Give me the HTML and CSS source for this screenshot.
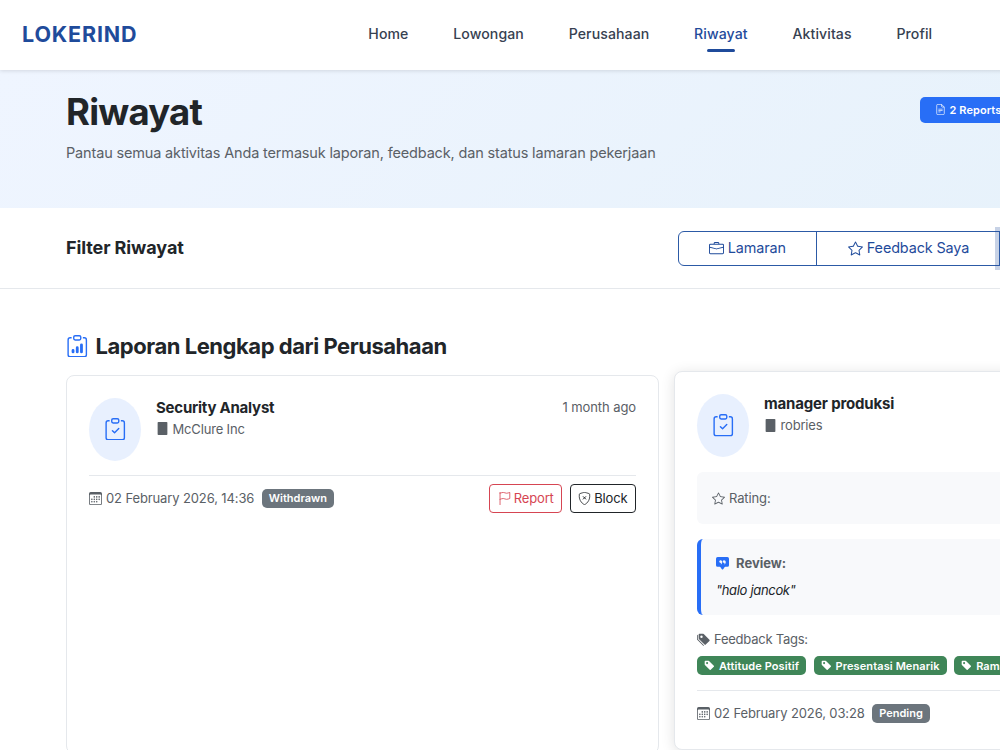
FILE: index.html
```html
<!DOCTYPE html>
<html lang="id">
<head>
<meta charset="utf-8">
<title>Riwayat - LOKERIND</title>
<link rel="stylesheet" href="styles.css">
</head>
<body>
<svg class="sprite" aria-hidden="true">
  <symbol id="board" viewBox="0 0 16 16"><path d="M4 1.5H3a2 2 0 0 0-2 2V14a2 2 0 0 0 2 2h10a2 2 0 0 0 2-2V3.5a2 2 0 0 0-2-2h-1v1h1a1 1 0 0 1 1 1V14a1 1 0 0 1-1 1H3a1 1 0 0 1-1-1V3.5a1 1 0 0 1 1-1h1z"/><path d="M9.5 1a.5.5 0 0 1 .5.5v1a.5.5 0 0 1-.5.5h-3a.5.5 0 0 1-.5-.5v-1a.5.5 0 0 1 .5-.5zm-3-1A1.5 1.5 0 0 0 5 1.5v1A1.5 1.5 0 0 0 6.5 4h3A1.5 1.5 0 0 0 11 2.5v-1A1.5 1.5 0 0 0 9.5 0z"/></symbol>
  <symbol id="data" viewBox="0 0 16 16"><use href="#board"/><path d="M4 11a1 1 0 1 1 2 0v1a1 1 0 1 1-2 0zm6-4a1 1 0 1 1 2 0v5a1 1 0 1 1-2 0zM7 9a1 1 0 0 1 2 0v3a1 1 0 1 1-2 0z"/></symbol>
  <symbol id="check" viewBox="0 0 16 16"><use href="#board"/><path d="M10.854 7.146a.5.5 0 0 1 0 .708l-3 3a.5.5 0 0 1-.708 0l-1.5-1.5a.5.5 0 1 1 .708-.708L7.5 9.793l2.646-2.647a.5.5 0 0 1 .708 0"/></symbol>
  <symbol id="star" viewBox="0 0 16 16"><path d="M2.866 14.85c-.078.444.36.791.746.593l4.39-2.256 4.389 2.256c.386.198.824-.149.746-.592l-.83-4.73 3.522-3.356c.33-.314.16-.888-.282-.95l-4.898-.696L8.465.792a.513.513 0 0 0-.927 0L5.354 5.12l-4.898.696c-.441.062-.612.636-.283.95l3.523 3.356-.83 4.73zm4.905-2.767-3.686 1.894.694-3.957a.56.56 0 0 0-.163-.505L1.71 6.745l4.052-.576a.53.53 0 0 0 .393-.288L8 2.223l1.847 3.658a.53.53 0 0 0 .393.288l4.052.575-2.906 2.77a.56.56 0 0 0-.163.506l.694 3.957-3.686-1.894a.5.5 0 0 0-.461 0z"/></symbol>
  <symbol id="briefcase" viewBox="0 0 16 16"><path d="M6.5 1A1.5 1.5 0 0 0 5 2.5V3H1.5A1.5 1.5 0 0 0 0 4.5v8A1.5 1.5 0 0 0 1.5 14h13a1.5 1.5 0 0 0 1.5-1.5v-8A1.5 1.5 0 0 0 14.5 3H11v-.5A1.5 1.5 0 0 0 9.5 1zm0 1h3a.5.5 0 0 1 .5.5V3H6v-.5a.5.5 0 0 1 .5-.5m1.886 6.914L15 7.151V12.5a.5.5 0 0 1-.5.5h-13a.5.5 0 0 1-.5-.5V7.15l6.614 1.764a1.5 1.5 0 0 0 .772 0M1.5 4h13a.5.5 0 0 1 .5.5v1.616L8.129 7.948a.5.5 0 0 1-.258 0L1 6.116V4.5a.5.5 0 0 1 .5-.5"/></symbol>
  <symbol id="flag" viewBox="0 0 16 16"><path fill="none" stroke="currentColor" stroke-linecap="round" stroke-linejoin="round" d="M2.5.5v15M2.5 1.5C4 1 5.5.5 6.5.5c1.5 0 2.5 1 4 1 1.2 0 2.8-.5 4-1V8c-1.2.5-2.8 1-4 1-1.5 0-2.5-1-4-1-1.2 0-2.8.5-4 1"/></symbol>
  <symbol id="shield" viewBox="0 0 16 16"><path fill="none" stroke="currentColor" d="M5.2 1.1a61 61 0 0 0-2.9.9.98.98 0 0 0-.65.8c-.6 4.5.8 7.5 2.4 9.6a11 11 0 0 0 2.4 2.3q1 .7 1.55.8.55-.1 1.55-.8a11 11 0 0 0 2.4-2.3c1.6-2.1 3-5.1 2.4-9.6a.98.98 0 0 0-.65-.8c-.6-.2-1.8-.6-2.9-.9Q8.7.5 8 .5q-.7 0-2.8.6z"/><path fill="none" stroke="currentColor" stroke-width="1.2" stroke-linecap="round" d="m6.5 5.7 3 3m0-3-3 3"/></symbol>
  <symbol id="file" viewBox="0 0 16 16"><path fill="none" stroke="currentColor" stroke-linejoin="round" d="M9.5.5H4A1.5 1.5 0 0 0 2.5 2v12A1.5 1.5 0 0 0 4 15.5h8a1.5 1.5 0 0 0 1.5-1.5V4.5zv2.5A1.5 1.5 0 0 0 11 4.5h2.5"/><path fill="none" stroke="currentColor" stroke-linecap="round" d="M5.5 7.5h5m-5 2h5m-5 2h2"/></symbol>
  <symbol id="calendar" viewBox="0 0 16 16"><path d="M14 0H2a2 2 0 0 0-2 2v12a2 2 0 0 0 2 2h12a2 2 0 0 0 2-2V2a2 2 0 0 0-2-2M1 3.857C1 3.384 1.448 3 2 3h12c.552 0 1 .384 1 .857v10.286c0 .473-.448.857-1 .857H2c-.552 0-1-.384-1-.857z"/><path fill="none" stroke="currentColor" stroke-width="2" stroke-linecap="round" stroke-dasharray="0 3" d="M6.5 6h6.1M3.5 9h9.1M3.5 12h6.1"/></symbol>
  <symbol id="building" viewBox="0 0 16 16"><path d="M3 0h10a1 1 0 0 1 1 1v14a1 1 0 0 1-1 1H3a1 1 0 0 1-1-1V1a1 1 0 0 1 1-1"/></symbol>
  <symbol id="quote" viewBox="0 0 16 16"><path d="M0 2a2 2 0 0 1 2-2h12a2 2 0 0 1 2 2v8a2 2 0 0 1-2 2h-2.5a1 1 0 0 0-.8.4l-1.9 2.533a1 1 0 0 1-1.6 0L5.3 12.4a1 1 0 0 0-.8-.4H2a2 2 0 0 1-2-2zm7.194 2.766a1.7 1.7 0 0 0-.227-.272 1.5 1.5 0 0 0-.469-.324l-.008-.004A1.8 1.8 0 0 0 5.734 4C4.776 4 4 4.746 4 5.667c0 .92.776 1.666 1.734 1.666.343 0 .662-.095.931-.26-.137.389-.39.804-.81 1.22a.405.405 0 0 0 .011.59c.173.16.447.155.614-.01 1.334-1.329 1.37-2.758.941-3.706a2.5 2.5 0 0 0-.227-.4zM11 7.073c-.136.389-.39.804-.81 1.22a.405.405 0 0 0 .012.59c.172.16.446.155.613-.01 1.334-1.329 1.37-2.758.942-3.706a2.5 2.5 0 0 0-.228-.4 1.7 1.7 0 0 0-.227-.273 1.5 1.5 0 0 0-.469-.324l-.008-.004A1.8 1.8 0 0 0 10.07 4c-.957 0-1.734.746-1.734 1.667 0 .92.777 1.666 1.734 1.666.343 0 .662-.095.931-.26z"/></symbol>
  <symbol id="tag" viewBox="0 0 16 16"><path d="M2 1a1 1 0 0 0-1 1v4.586a1 1 0 0 0 .293.707l7 7a1 1 0 0 0 1.414 0l4.586-4.586a1 1 0 0 0 0-1.414l-7-7A1 1 0 0 0 6.586 1zm4 3.5a1.5 1.5 0 1 1-3 0 1.5 1.5 0 0 1 3 0"/></symbol>
  <symbol id="tags" viewBox="0 0 16 16"><path d="M2 2a1 1 0 0 1 1-1h4.586a1 1 0 0 1 .707.293l7 7a1 1 0 0 1 0 1.414l-4.586 4.586a1 1 0 0 1-1.414 0l-7-7A1 1 0 0 1 2 6.586zm3.5 4a1.5 1.5 0 1 0 0-3 1.5 1.5 0 0 0 0 3"/><path d="M1.293 7.793A1 1 0 0 1 1 7.086V2a1 1 0 0 0-1 1v4.586a1 1 0 0 0 .293.707l7 7a1 1 0 0 0 1.414 0l.043-.043z"/></symbol>
</svg>
<div class="page">
  <header class="navbar">
    <a class="brand">LOKERIND</a>
    <nav class="links"><a>Home</a><a>Lowongan</a><a>Perusahaan</a><a class="active">Riwayat</a><a>Aktivitas</a><a>Profil</a></nav>
  </header>
  <section class="hero">
    <div>
      <h1>Riwayat</h1>
      <p>Pantau semua aktivitas Anda termasuk laporan, feedback, dan status lamaran pekerjaan</p>
    </div>
    <div class="count"><svg class="icon"><use href="#file"/></svg><span>2 Reports</span></div>
  </section>
  <section class="filter">
    <h2>Filter Riwayat</h2>
    <div class="group">
      <button class="first"><svg class="icon"><use href="#briefcase"/></svg><span>Lamaran</span></button>
      <button class="second"><svg class="icon"><use href="#star"/></svg><span>Feedback Saya</span></button>
      <button class="current"></button>
    </div>
  </section>
  <main>
    <h2 class="section-title"><svg class="icon"><use href="#data"/></svg><span>Laporan Lengkap dari Perusahaan</span></h2>
    <div class="cards">
      <article class="card">
        <div class="card-head">
          <div class="avatar"><svg class="icon"><use href="#check"/></svg></div>
          <div class="who"><h3>Security Analyst</h3><p><svg class="icon"><use href="#building"/></svg><span>McClure Inc</span></p></div>
          <div class="ago">1 month ago</div>
        </div>
        <div class="card-foot">
          <svg class="icon"><use href="#calendar"/></svg><span class="date">02 February 2026, 14:36</span><b class="status">Withdrawn</b>
          <div class="actions"><button class="report"><svg class="icon"><use href="#flag"/></svg><span>Report</span></button><button class="block"><svg class="icon"><use href="#shield"/></svg><span>Block</span></button></div>
        </div>
      </article>
      <article class="card raised">
        <div class="card-head">
          <div class="avatar"><svg class="icon"><use href="#check"/></svg></div>
          <div class="who"><h3>manager produksi</h3><p><svg class="icon"><use href="#building"/></svg><span>robries</span></p></div>
        </div>
        <div class="rating"><svg class="icon"><use href="#star"/></svg><span>Rating:</span></div>
        <div class="review"><h4><svg class="icon"><use href="#quote"/></svg><span>Review:</span></h4><p>"halo jancok"</p></div>
        <div class="tags-title"><svg class="icon"><use href="#tags"/></svg><span>Feedback Tags:</span></div>
        <div class="tags"><b><svg class="icon"><use href="#tag"/></svg><span>Attitude Positif</span></b><b><svg class="icon"><use href="#tag"/></svg><span>Presentasi Menarik</span></b><b><svg class="icon"><use href="#tag"/></svg><span>Ramah</span></b></div>
        <div class="card-foot"><svg class="icon"><use href="#calendar"/></svg><span class="date">02 February 2026, 03:28</span><b class="status">Pending</b></div>
      </article>
    </div>
  </main>
</div>
</body>
</html>
```
FILE: styles.css
```css
* { box-sizing: border-box; }
body { margin: 0; overflow: hidden; height: 750px; background: #fff; color: #212529; font: 13px/20px Inter, "Liberation Sans", sans-serif; letter-spacing: -.12px; }
h1, h2, h3, h4, p { margin: 0; }
button { font: inherit; letter-spacing: inherit; background: #fff; margin: 0; }
.sprite { position: absolute; width: 0; height: 0; }
.icon { display: block; flex: none; width: 13px; height: 13px; fill: currentColor; }
.page { width: 1333px; height: 750px; overflow: hidden; }
.navbar { position: relative; display: flex; align-items: center; height: 69.5px; padding: 0 22px; background: #fff; box-shadow: 0 1px 4px rgba(0,0,0,.12); }
.brand { width: 346.3px; margin-top: -2px; font-size: 21.5px; font-weight: 700; letter-spacing: .83px; color: #1f4b9b; }
.links { display: flex; gap: 44.8px; font-size: 14.1px; font-weight: 500; letter-spacing: .09px; color: #374151; margin-top: -2px; }
.links a { position: relative; }
.links .active { color: #1f4b9b; }
.active::after { content: ""; position: absolute; left: 13px; width: 28px; top: 25px; height: 3px; border-radius: 2px; background: #1f4b9b; }
.hero { display: flex; justify-content: space-between; height: 138px; padding: 20px 67px 0 66px; background: linear-gradient(135deg, #eff5ff, #e5f1fa); }
h1 { font-size: 36.5px; line-height: 45px; font-weight: 700; letter-spacing: -.78px; }
.hero p { margin-top: 8px; font-size: 14.5px; line-height: 20px; letter-spacing: -.16px; color: #5a6066; }
.count { display: flex; align-items: center; height: 26px; width: 346.5px; margin-top: 7px; padding: 0 15px; gap: 4px; border-radius: 5px; background: #286ef6; color: #fff; font-size: 11px; font-weight: 600; letter-spacing: .08px; }
.count .icon { width: 11px; height: 11px; }
.filter { display: flex; align-items: center; justify-content: space-between; height: 81px; padding: 1px 67px 0 66px; border-bottom: 1px solid #e5e8ec; }
.filter h2 { font-size: 18px; font-weight: 700; letter-spacing: -.1px; }
.group { display: flex; width: 588.5px; height: 35px; color: #1f4b9b; font-size: 14.4px; letter-spacing: -.12px; }
.group button { display: flex; align-items: center; justify-content: center; gap: 4px; border: 1px solid #2c5aa6; color: inherit; padding: 0; }
.group .icon { width: 15px; height: 15px; }
.group .first { width: 139.5px; border-radius: 6px 0 0 6px; }
.group .second { width: 184px; margin-left: -1px; padding-left: 1px; }
.group .current { width: 200px; margin-left: -1.5px; background: #1f4b9b; box-shadow: 0 0 0 4px rgba(31,75,155,.25); }
main { padding: 45px 66px 0; }
.section-title { display: flex; align-items: center; gap: 7px; height: 24px; font-size: 22px; font-weight: 700; letter-spacing: -.46px; }
.section-title .icon { width: 22.5px; height: 22.5px; margin-top: 1px; color: #286ef6; }
.cards { display: flex; gap: 15px; align-items: flex-start; margin-top: 17px; }
.card { flex: none; width: 593px; height: 379px; padding: 22px; border: 1px solid #e5e8ec; border-radius: 8px; background: #fff; }
.raised { margin-top: -3.5px; box-shadow: 0 2px 14px rgba(0,0,0,.12); }
.card-head { display: flex; height: 63px; }
.avatar { display: flex; align-items: center; justify-content: center; width: 52px; height: 63px; border-radius: 50%; background: #e8f0fe; color: #286ef6; }
.avatar .icon { width: 22.5px; height: 22.5px; }
.who { margin-left: 15px; }
.who h3 { font-size: 15px; line-height: 19px; font-weight: 700; letter-spacing: -.23px; }
.raised .who h3 { line-height: 20px; letter-spacing: -.17px; }
.who p { display: flex; align-items: center; gap: 3.5px; margin-top: 2px; color: #5a6066; letter-spacing: -.17px; }
.raised .who p { margin-top: 1px; }
.ago { margin: -1px 0 0 auto; color: #5a6066; letter-spacing: -.08px; }
.card-foot { display: flex; align-items: center; margin-top: 14px; padding-top: 8px; border-top: 1px solid #e5e8ec; color: #5a6066; }
.raised .card-foot { padding-top: 12px; }
.date { margin-left: 4px; }
.status { display: flex; align-items: center; height: 19px; margin-left: 7.5px; padding: 0 7px; border-radius: 5px; background: #6c757d; color: #fff; font-size: 11px; font-weight: 600; letter-spacing: 0; }
.actions { display: flex; gap: 7.5px; margin-left: auto; }
.actions button { display: flex; align-items: center; gap: 3px; height: 29px; padding: 0 7.5px; border: 1px solid #212529; border-radius: 4px; color: #212529; letter-spacing: -.15px; }
.actions .report { border-color: #d64552; color: #d64552; }
.rating { display: flex; align-items: center; gap: 4px; height: 52px; margin-top: 15px; padding-left: 15px; border-radius: 6px; background: #f8f9fb; color: #5a6066; }
.review { height: 76px; margin-top: 15px; padding: 14px 15px; border-left: 4px solid #286ef6; border-radius: 6px; background: #f8f9fb; }
.review h4 { display: flex; align-items: center; gap: 7px; color: #5a6066; font-weight: 700; letter-spacing: 0; }
.review .icon { color: #286ef6; }
.review p { margin-top: 7px; font-style: italic; letter-spacing: -.32px; }
.tags-title { display: flex; align-items: center; gap: 4px; height: 20px; margin-top: 14px; color: #5a6066; letter-spacing: -.24px; }
.tags { display: flex; gap: 7.5px; margin-top: 7px; }
.tags b { display: flex; align-items: center; gap: 4px; height: 19px; padding: 0 7px; border-radius: 5px; background: #3f8658; color: #fff; font-size: 11px; font-weight: 600; letter-spacing: .1px; }
.tags + .card-foot { margin-top: 15px; }
.tags .icon { width: 11px; height: 11px; }
```
